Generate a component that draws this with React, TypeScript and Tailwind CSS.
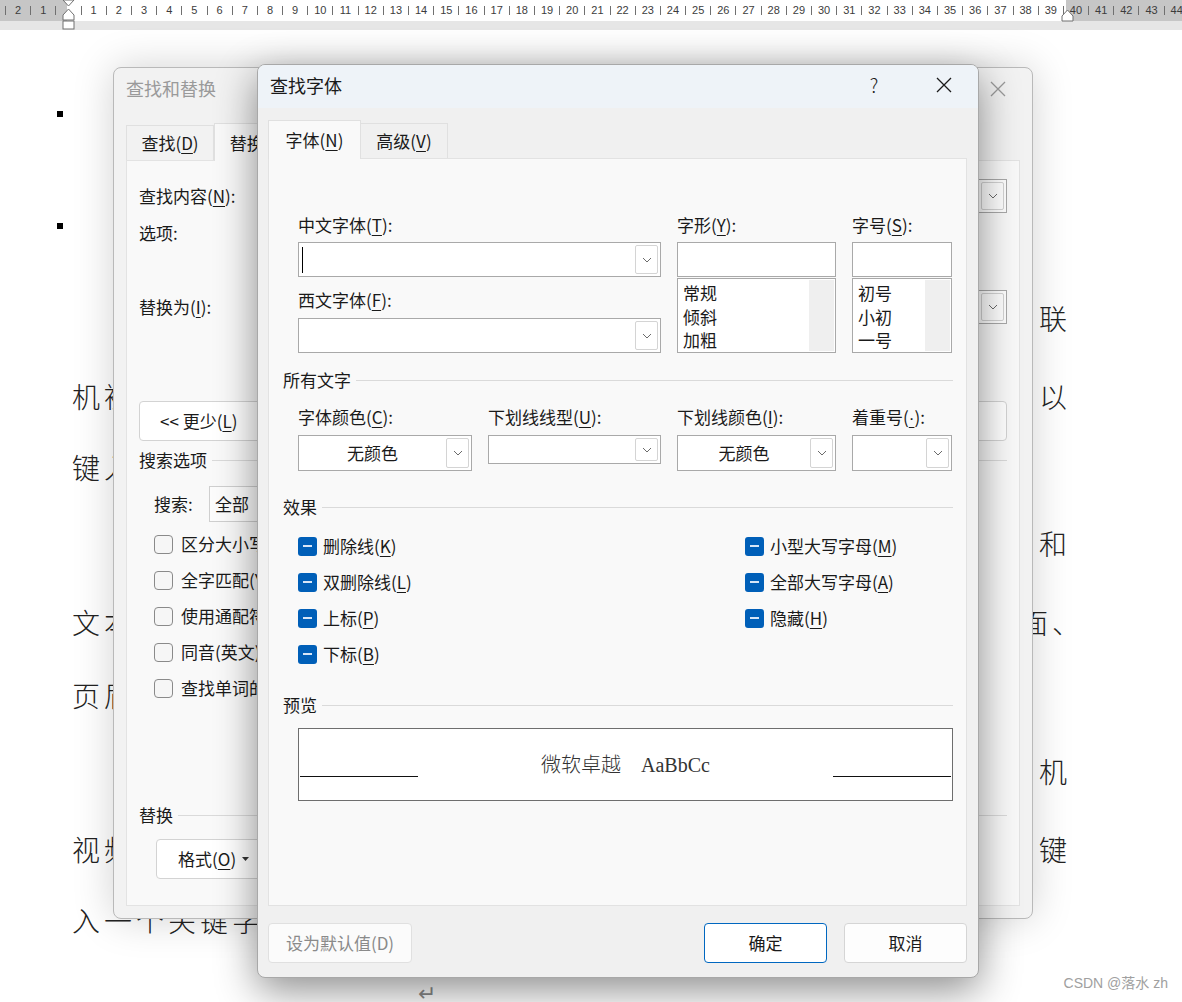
import React from 'react';

const CJK = "font-['Noto_Sans_CJK_SC',sans-serif]";

const RULER = Array.from({ length: 47 }, (_, i) => i - 2);

const LINES = [
  { mt: 'mt-[52px]', left: '', right: '联', rc: '' },
  { mt: 'mt-[38px]', left: '机被', right: '以', rc: '' },
  { mt: 'mt-[31px]', left: '键入', right: '', rc: '' },
  { mt: 'mt-[36px]', left: '', right: '和', rc: '' },
  { mt: 'mt-[39px]', left: '文本', right: '面、', rc: '-mr-[13px]' },
  { mt: 'mt-[33px]', left: '页眉', right: '', rc: '' },
  { mt: 'mt-[36px]', left: '', right: '机', rc: '' },
  { mt: 'mt-[38px]', left: '视频', right: '键', rc: '' },
  { mt: 'mt-[31px]', left: '入一个关键字', right: '', rc: '' },
];

function K({ c }: { c: string }) {
  return <span className="underline decoration-1 underline-offset-[3px]">{c}</span>;
}

function Chevron() {
  return (
    <svg width="10" height="6" viewBox="0 0 10 6">
      <path d="M1 1l4 4 4-4" fill="none" stroke="#6b6b6b" strokeWidth="1" />
    </svg>
  );
}

function CloseX({ color }: { color: string }) {
  return (
    <svg width="16" height="16" viewBox="0 0 16 16">
      <path d="M1 1L15 15M15 1L1 15" stroke={color} strokeWidth="1.3" fill="none" />
    </svg>
  );
}

function DropBtn() {
  return (
    <div className="my-[2px] mr-[2px] w-[23px] flex-none rounded-[2px] border border-[#d4d4d4] bg-white flex items-center justify-center">
      <Chevron />
    </div>
  );
}

function Combo({ className = '', text, center, caret }: { className?: string; text?: string; center?: boolean; caret?: boolean }) {
  return (
    <div className={`flex border border-[#a9a9a9] bg-white ${className}`}>
      <div className={`flex-1 flex items-center ${center ? 'justify-center' : 'pl-[3px]'}`}>
        {caret && <span className="w-px h-[26px] bg-black" />}
        {text}
      </div>
      <DropBtn />
    </div>
  );
}

function ListBox({ items }: { items: string[] }) {
  return (
    <div className="mt-[1px] h-[75px] flex border border-[#a9a9a9] bg-white">
      <div className="flex-1 pl-[5px] pt-[2px] leading-[23.5px]">
        {items.map((i) => (
          <div key={i}>{i}</div>
        ))}
      </div>
      <div className="w-[25px] my-px mr-px bg-[#efefef]" />
    </div>
  );
}

function Section({ title, className = '' }: { title: string; className?: string }) {
  return (
    <div className={`flex items-center h-[24px] ${className}`}>
      <span className="leading-[24px]">{title}</span>
      <div className="flex-1 ml-[5px] h-px bg-[#dadada]" />
    </div>
  );
}

function Tri({ children }: { children: React.ReactNode }) {
  return (
    <div className="flex items-center h-[24px]">
      <span className="w-[19px] h-[19px] rounded-[3px] bg-[#005fb8] flex items-center justify-center">
        <span className="w-[9px] h-[2px] bg-[#d8e6f7]" />
      </span>
      <span className="ml-[6px] leading-[24px]">{children}</span>
    </div>
  );
}

function Box({ children }: { children: React.ReactNode }) {
  return (
    <div className="flex items-center h-[24px]">
      <span className="w-[19px] h-[19px] rounded-[4px] border border-[#8a8a8a] bg-[#f6f6f6]" />
      <span className="ml-[8px] whitespace-nowrap">{children}</span>
    </div>
  );
}

function Label({ children, className = '' }: { children: React.ReactNode; className?: string }) {
  return <div className={`h-[24px] leading-[24px] whitespace-nowrap ${className}`}>{children}</div>;
}

function BackDialog() {
  return (
    <div className="absolute z-0 left-[113px] top-[67px] w-[920px] h-[852px] rounded-[8px] border border-[#b9b9b9] bg-[#f2f2f2] shadow-[0_0_40px_rgba(0,0,0,0.18)] flex flex-col text-[17px] text-[#1a1a1a]">
      <div className="h-[44px] pb-[3px] flex items-center justify-between pl-[12px] pr-[26px]">
        <span className="text-[18px] text-[#9a9a9a]">查找和替换</span>
        <CloseX color="#9a9a9a" />
      </div>
      <div className="flex items-end pl-[12px] pt-[11px]">
        <div className="h-[35px] w-[88px] border border-b-0 border-[#e0e0e0] flex items-center justify-center">
          查找(<K c="D" />)
        </div>
        <div className="relative z-10 -mb-px h-[38px] w-[88px] border border-b-0 border-[#e0e0e0] bg-[#f9f9f9] flex items-center justify-center">
          替换(<K c="P" />)
        </div>
      </div>
      <div className="mx-[12px] mb-[12px] flex-1 border border-[#e3e3e3] bg-[#f9f9f9] px-[12px]">
        <div className="mt-[18px] flex items-center h-[34px]">
          <div className="w-[118px]">查找内容(<K c="N" />):</div>
          <Combo className="flex-1 h-[34px]" />
        </div>
        <Label className="mt-[8px]">选项:</Label>
        <div className="mt-[45px] flex items-center h-[34px]">
          <div className="w-[118px]">替换为(<K c="I" />):</div>
          <Combo className="flex-1 h-[34px]" />
        </div>
        <div className="mt-[77px] flex justify-between">
          <div className="h-[40px] w-[130px] rounded-[4px] border border-[#d3d3d3] bg-white flex items-center pl-[20px]">
            &lt;&lt; 更少(<K c="L" />)
          </div>
          <div className="h-[40px] w-[120px] rounded-[4px] border border-[#d3d3d3] bg-white flex items-center justify-center">
            取消
          </div>
        </div>
        <Section title="搜索选项" className="mt-[7px]" />
        <div className="pl-[15px]">
          <div className="mt-[14px] flex items-center">
            <span className="w-[55px]">搜索:</span>
            <div className="h-[36px] w-[120px] border border-[#cfcfcf] bg-[#fcfcfc] flex items-center pl-[5px]">全部</div>
          </div>
          <div className="mt-[10px] flex flex-col gap-[12px]">
            <Box>区分大小写(H)</Box>
            <Box>全字匹配(Y)</Box>
            <Box>使用通配符(U)</Box>
            <Box>同音(英文)(K)</Box>
            <Box>查找单词的所有形式(英文)(W)</Box>
          </div>
        </div>
        <Section title="替换" className="mt-[103px]" />
        <div className="mt-[12px] pl-[17px]">
          <div className="h-[40px] w-[110px] rounded-[4px] border border-[#d3d3d3] bg-white flex items-center pl-[21px] gap-[6px]">
            <span>
              格式(<K c="O" />)
            </span>
            <svg width="7" height="4" viewBox="0 0 7 4">
              <path d="M0 0h7L3.5 4z" fill="#333" />
            </svg>
          </div>
        </div>
      </div>
    </div>
  );
}

function FrontDialog() {
  return (
    <div className="absolute z-10 left-[257px] top-[64px] w-[722px] h-[914px] rounded-[8px] border border-[#a8a8a8] bg-[#f0f0f0] shadow-[0_12px_40px_rgba(0,0,0,0.45)] overflow-hidden flex flex-col text-[17px] text-[#1a1a1a]">
      <div className="h-[43px] pb-[3px] flex-none bg-[#eef3f8] flex items-center pl-[12px]">
        <span className="text-[18px]">查找字体</span>
        <span className="ml-auto w-[20px] text-center text-[19px] font-light">?</span>
        <span className="ml-[52px] mr-[26px] flex">
          <CloseX color="#1a1a1a" />
        </span>
      </div>
      <div className="flex items-end pl-[10px] pt-[12px]">
        <div className="relative z-10 -mb-px h-[39px] w-[93px] border border-b-0 border-[#e0e0e0] bg-[#f9f9f9] flex items-center justify-center">
          字体(<K c="N" />)
        </div>
        <div className="h-[35px] w-[87px] border border-b-0 border-l-0 border-[#e0e0e0] flex items-center justify-center">
          高级(<K c="V" />)
        </div>
      </div>
      <div className="ml-[10px] mr-[11px] h-[748px] flex-none border border-[#e2e2e2] bg-[#f9f9f9] pt-[54px] pl-[14px] pr-[13px]">
        <div className="pl-[15px] flex gap-[16px]">
          <div className="w-[363px]">
            <Label>
              中文字体(<K c="T" />):
            </Label>
            <Combo className="mt-[5px] h-[35px]" caret />
            <Label className="mt-[11px]">
              西文字体(<K c="F" />):
            </Label>
            <Combo className="mt-[6px] h-[35px]" />
          </div>
          <div className="w-[159px]">
            <Label>
              字形(<K c="Y" />):
            </Label>
            <div className="mt-[5px] h-[35px] border border-[#a9a9a9] bg-white" />
            <ListBox items={['常规', '倾斜', '加粗']} />
          </div>
          <div className="w-[100px]">
            <Label>
              字号(<K c="S" />):
            </Label>
            <div className="mt-[5px] h-[35px] border border-[#a9a9a9] bg-white" />
            <ListBox items={['初号', '小初', '一号']} />
          </div>
        </div>

        <Section title="所有文字" className="mt-[15px]" />
        <div className="pl-[15px] mt-[13px] flex gap-[16px] items-start">
          <div className="w-[174px]">
            <Label>
              字体颜色(<K c="C" />):
            </Label>
            <Combo className="mt-[6px] h-[36px]" text="无颜色" center />
          </div>
          <div className="w-[173px]">
            <Label>
              下划线线型(<K c="U" />):
            </Label>
            <Combo className="mt-[6px] h-[29px]" />
          </div>
          <div className="w-[159px]">
            <Label>
              下划线颜色(<K c="I" />):
            </Label>
            <Combo className="mt-[6px] h-[36px]" text="无颜色" center />
          </div>
          <div className="w-[100px]">
            <Label>
              着重号(<span className="underline decoration-1 underline-offset-[3px] font-['Liberation_Sans',sans-serif]">·</span>):
            </Label>
            <Combo className="mt-[6px] h-[36px]" />
          </div>
        </div>

        <Section title="效果" className="mt-[24px]" />
        <div className="pl-[15px] mt-[15px] grid grid-cols-[447px_1fr] gap-y-[12px]">
          <Tri>
            删除线(<K c="K" />)
          </Tri>
          <Tri>
            小型大写字母(<K c="M" />)
          </Tri>
          <Tri>
            双删除线(<K c="L" />)
          </Tri>
          <Tri>
            全部大写字母(<K c="A" />)
          </Tri>
          <Tri>
            上标(<K c="P" />)
          </Tri>
          <Tri>
            隐藏(<K c="H" />)
          </Tri>
          <Tri>
            下标(<K c="B" />)
          </Tri>
        </div>

        <Section title="预览" className="mt-[27px]" />
        <div className="ml-[15px] mt-[11px] h-[73px] border border-[#6e6e6e] bg-white pt-[25px]">
          <div className="flex items-end h-[23px]">
            <div className="ml-px w-[118px] h-[1.5px] bg-[#111]" />
            <div className="flex-1 text-center leading-[23px] text-[20px] text-[#333] font-['Liberation_Serif','Noto_Sans_CJK_SC',serif] font-light">
              微软卓越&nbsp;&nbsp;&nbsp;&nbsp;AaBbCc
            </div>
            <div className="mr-px w-[118px] h-[1.5px] bg-[#111]" />
          </div>
        </div>
      </div>
      <div className="mt-[17px] flex pl-[10px] pr-[11px]">
        <div className="h-[40px] w-[144px] rounded-[4px] border border-[#e0e0e0] bg-[#fbfbfb] text-[#8a8a8a] flex items-center justify-center">
          设为默认值(D)
        </div>
        <div className="ml-auto h-[40px] w-[123px] rounded-[4px] border border-[#0067c0] bg-white flex items-center justify-center">
          确定
        </div>
        <div className="ml-[17px] h-[40px] w-[123px] rounded-[4px] border border-[#d5d5d5] bg-[#fdfdfd] flex items-center justify-center">
          取消
        </div>
      </div>
    </div>
  );
}

export default function App() {
  return (
    <div className={`relative w-[1182px] h-[1002px] overflow-hidden bg-white ${CJK}`}>
      {/* ruler */}
      <div className="h-[21px] flex items-center pl-[5px] bg-[linear-gradient(to_right,#c6c6c6_67px,#ffffff_67px,#ffffff_1066px,#c6c6c6_1066px)] font-['Liberation_Sans',sans-serif] text-[11px] text-[#3c3c3c] overflow-hidden">
        {RULER.map((n) => (
          <div key={n} className="w-[25.2px] flex-none flex items-center">
            <span className="w-px h-[9px] bg-[#707070]" />
            <span className="flex-1 text-center">{n === 0 ? '' : Math.abs(n)}</span>
          </div>
        ))}
      </div>
      <div className="h-[9px] bg-[#e6e6e6]" />
      <svg className="absolute left-[62px] top-0" width="13" height="30" viewBox="0 0 13 30">
        <polygon points="1,0 12,0 6.5,6" fill="#fff" stroke="#707070" />
        <polygon points="6.5,9 12,15 12,20 1,20 1,15" fill="#fff" stroke="#707070" />
        <rect x="1" y="21" width="11" height="8" fill="#fff" stroke="#707070" />
      </svg>
      <svg className="absolute left-[1061px] top-0" width="13" height="30" viewBox="0 0 13 30">
        <polygon points="6.5,10 12,16 12,21 1,21 1,16" fill="#fff" stroke="#707070" />
      </svg>

      {/* document body */}
      <div className="pl-[72px] pr-[111px] text-[28px] font-light text-[#222] tracking-[4px] whitespace-nowrap">
        <div className="mt-[64px] h-[40px] flex items-center -ml-[15px]">
          <span className="w-[6px] h-[6px] bg-black" />
        </div>
        <div className="mt-[72px] h-[40px] flex items-center -ml-[15px]">
          <span className="w-[6px] h-[6px] bg-black" />
        </div>
        {LINES.map((l, i) => (
          <div key={i} className={`${l.mt} h-[40px] flex items-center justify-between`}>
            <span>{l.left}</span>
            <span className={l.rc}>{l.right}</span>
          </div>
        ))}
        <div className="mt-[31px] h-[40px] flex items-center ml-[346px] text-[22px] text-[#8a8a8a]">↵</div>
      </div>

      <BackDialog />
      <FrontDialog />

      <div className="absolute z-20 right-[14px] bottom-[8px] text-[14px] text-[#a0a0a0] font-['Liberation_Sans','Noto_Sans_CJK_SC',sans-serif]">
        CSDN @落水 zh
      </div>
    </div>
  );
}
